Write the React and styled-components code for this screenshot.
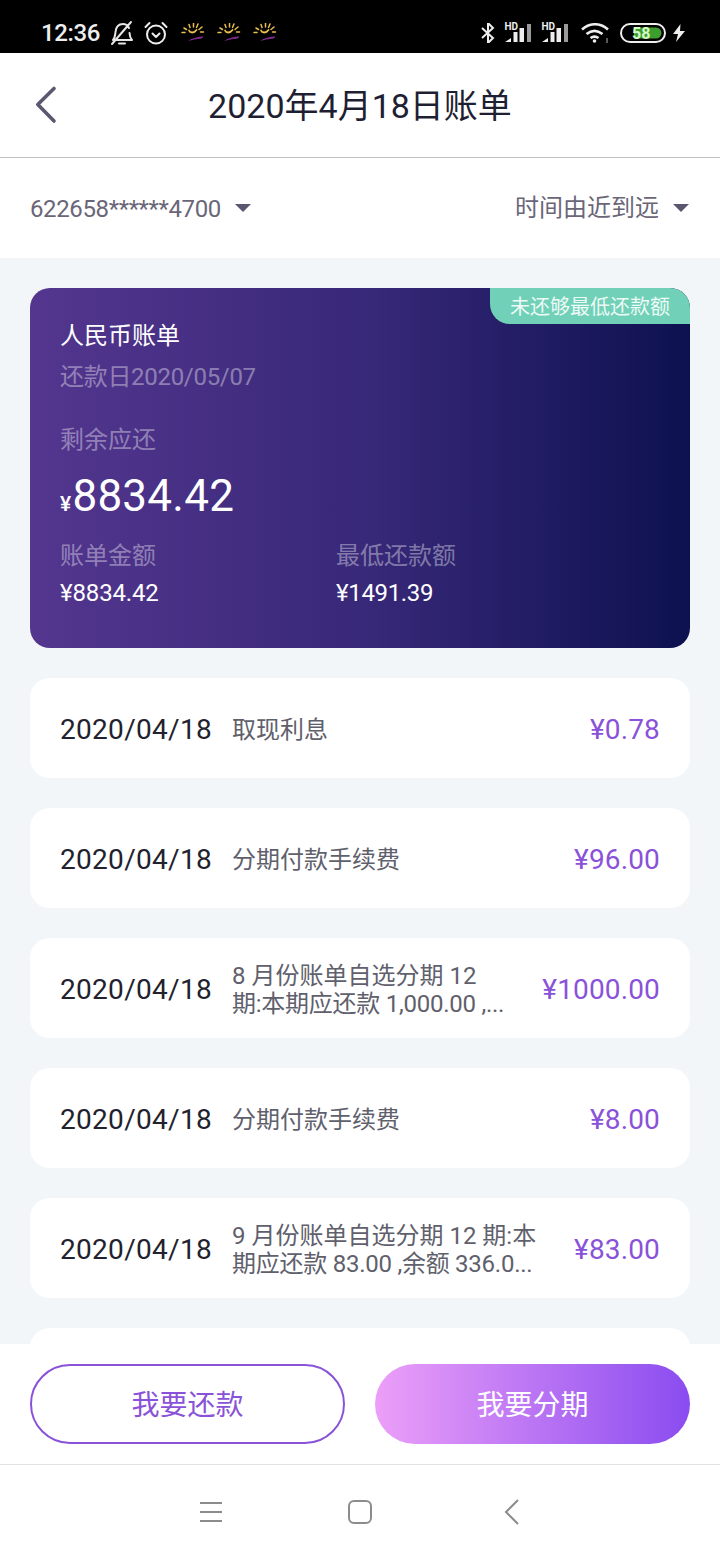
import React from 'react';
import styled, { createGlobalStyle } from 'styled-components';

const Global = createGlobalStyle`
  html, body { margin: 0; padding: 0; background: #fff; }
  * { box-sizing: border-box; }
  body { font-family: Roboto, "Noto Sans CJK SC", sans-serif; }
`;

const Phone = styled.div`
  width: 720px; height: 1560px; display: flex; flex-direction: column; overflow: hidden; background: #f2f6f8;
`;
const StatusBar = styled.div`
  height: 53px; flex: none; background: #000; color: #eee; display: flex; align-items: center; justify-content: space-between;
  padding: 13px 34px 0 41px;
`;
const StatusGroup = styled.div`
  display: flex; align-items: center; gap: ${p => p.$gap || 0}px; margin-left: ${p => p.$left || 0}px;
`;
const Clock = styled.span`
  font-size: 24px; font-weight: 500; margin-right: 1px; line-height: 1; width: 58px; white-space: nowrap; letter-spacing: -.4px;
`;
const Header = styled.header`
  height: 105px; flex: none; background: #fff; border-bottom: 1px solid #bdbdc2; display: flex; align-items: center; justify-content: center; position: relative;
`;
const BackButton = styled.div`
  position: absolute; left: 32px; top: 32px; width: 28px; height: 40px;
`;
const Title = styled.h1`
  margin: 0; font-size: 34px; font-weight: 400; color: #1f1f33; line-height: 1; position: relative; top: 1px;
`;
const FilterBar = styled.div`
  height: 100px; flex: none; background: #fff; display: flex; align-items: center; justify-content: space-between; padding: 0 31px 0 30px;
`;
const Filter = styled.div`
  display: flex; align-items: center; gap: 14px; font-size: 24px; line-height: 30px; color: #6a6678;
`;
const Label = styled.span`
  position: relative; top: ${p => p.$shift || 0}px; letter-spacing: ${p => p.$track || 0}px;
`;
const Caret = styled.span`
  width: 0; height: 0; border-left: 8px solid transparent; border-right: 8px solid transparent; border-top: 8px solid #5b5670;
`;
const Scroll = styled.main`
  flex: 1; min-height: 0; overflow: hidden; display: flex; flex-direction: column; gap: 30px; padding: 30px 30px 0;
`;
const BillCard = styled.section`
  height: 360px; flex: none; border-radius: 20px; position: relative; overflow: hidden; color: #fff;
  background: linear-gradient(90deg, #54368f 0%, #372878 52%, #0d1150 100%);
  padding: 32px 30px 0;
`;
const Badge = styled.div`
  position: absolute; top: 0; right: 0; height: 36px; width: 200px; background: #70d1b8; border-bottom-left-radius: 20px;
  display: flex; align-items: center; justify-content: center; font-size: 20px; color: #eefaf6; padding-bottom: 1px;
`;
const CardTitle = styled.div`
  font-size: 24px; line-height: 32px; color: #fff;
`;
const Muted = styled.div`
  font-size: 24px; line-height: 32px; color: rgba(255,255,255,.4);
  margin-top: ${p => p.$top || 0}px; letter-spacing: ${p => p.$track || 0}px;
`;
const Amount = styled.div`
  display: flex; align-items: baseline; font-size: 44px; line-height: 52px; margin-top: 14px; letter-spacing: .25px;
`;
const Yen = styled.span`
  font-size: 21px; font-weight: 500; margin-right: 1px;
`;
const Columns = styled.div`
  display: grid; grid-template-columns: 276px 1fr; margin-top: 10px;
`;
const Small = styled.div`
  font-size: 24px; line-height: 30px; color: #fff; margin-top: 6px; letter-spacing: ${p => p.$track || 0}px;
`;
const Row = styled.article`
  height: 100px; flex: none; background: #fff; border-radius: 20px; display: flex; align-items: center; padding: 2px 30px 0;
`;
const DateText = styled.div`
  font-size: 28px; color: #22222e; flex: none; width: 173px; white-space: nowrap; letter-spacing: .3px;
`;
const Desc = styled.div`
  flex: 1; min-width: 0; margin-left: -1px; font-size: 24px; line-height: 28px; color: #60606c;
  white-space: nowrap; padding-top: 2px;
`;
const DescLine = styled.div`
  letter-spacing: ${p => p.$second ? -0.25 : 0}px;
`;
const Price = styled.div`
  font-size: 28px; color: #8a52d8; flex: none; white-space: nowrap; letter-spacing: .15px;
`;
const Footer = styled.div`
  height: 121px; flex: none; background: #fff; border-bottom: 1px solid #e2e2e6; padding: 20px 30px 0; display: grid; grid-template-columns: 1fr 1fr; gap: 30px; align-items: start;
`;
const OutlineButton = styled.div`
  height: 80px; border-radius: 40px; border: 2px solid #8a52d8; color: #8a52d8; font-size: 28px; display: flex; align-items: center; justify-content: center; padding-bottom: 2px;
`;
const FillButton = styled.div`
  height: 80px; border-radius: 40px; color: #fff; font-size: 28px; display: flex; align-items: center; justify-content: center; padding-bottom: 2px;
  background: linear-gradient(90deg, #ec9ff8 0%, #8a4cf0 100%);
`;
const NavBar = styled.nav`
  height: 95px; flex: none; background: #fff; display: flex; align-items: center; padding: 0 0 2px 136.5px;
`;
const NavSlot = styled.div`
  width: ${p => p.$w || 149}px; display: flex; justify-content: center;
`;

const Sun = () => (
  <svg width="24" height="20" viewBox="0 0 24 20" fill="none">
    <g stroke="#e9bd4e" strokeWidth="1.5" strokeLinecap="round">
      <path d="M1 9.500h3M3 5l2.500 1.500M8 1.500l1 3M12.500 0v4M17 1l-1.500 3.500M21 4l-3 2.500M19.500 9h3" />
      <path d="M8 7.500c1 2.500 5 3 7.500-.5" strokeWidth="1.800" />
    </g>
    <path d="M7 18c4-3 10-4.500 15.500-4.500-1 1.500-1.500 2-3 2.200-4 .4-8 1-12.500 2.300z" fill="#7d2a8a" />
  </svg>
);
const Bell = () => (
  <svg width="24" height="26" viewBox="0 0 24 26" fill="none" stroke="#e6e6e6" strokeWidth="2" strokeLinecap="round" strokeLinejoin="round">
    <path d="M3 20c2-2 2-4 2.500-8C6 7 9 4 13 4c3 0 5 2 6 4M19.500 13c.2 3 .6 5 2.500 7H3M9 23.500h6M2 24L21 2" />
  </svg>
);
const Alarm = () => (
  <svg width="24" height="24" viewBox="0 0 24 24" fill="none" stroke="#eee" strokeWidth="2" strokeLinecap="round" strokeLinejoin="round">
    <circle cx="12" cy="13.500" r="9" />
    <path d="M8.500 12.500l3.500 3.500 3.500-3.500M1.500 6L5.500 2M22.500 6l-4-4" />
  </svg>
);
const Bluetooth = () => (
  <svg width="23" height="20" viewBox="0 0 23 20" fill="none" stroke="#eee" strokeWidth="2">
    <path d="M1 5l11 10-5 5V0l5 5L1 15" />
  </svg>
);
const HdLabel = styled.text`
  font: 700 10px Roboto, sans-serif; fill: #eee;
`;
const Signal = ({ w }) => (
  <svg width={w} height="22" viewBox={`0 0 ${w} 22`}>
    <HdLabel x="0.500" y="8">HD</HdLabel>
    <path d="M1 20l6-4v4z" fill="#eee" />
    <rect x="9.500" y="10" width="4" height="10" fill="#eee" />
    <rect x="15.500" y="6" width="4.500" height="14" fill="#eee" />
    <rect x="23" y="2" width="4" height="18" fill="#9a9a9a" />
  </svg>
);
const Wifi = () => (
  <svg width="39" height="20" viewBox="0 0 39 20" fill="none" stroke="#eee" strokeWidth="2.600">
    <path d="M1 6.500c8-7 18-7 26 0M5.500 11c5-4 11-4 16 0M9.500 15c3-2 5-2 8 0" />
    <circle cx="13.500" cy="18" r="1.800" fill="#eee" stroke="none" />
    <path d="M26 15v5" stroke="#777" strokeWidth="1.500" />
  </svg>
);
const BatteryText = styled.text`
  font: 700 16px Roboto, sans-serif; fill: #d6f8c8;
`;
const Battery = () => (
  <svg width="52" height="20" viewBox="0 0 52 20">
    <rect x="1" y="1" width="44" height="18" rx="9" fill="none" stroke="#eee" strokeWidth="2" />
    <path d="M14 4.500h22a5.500 5.500 0 0 1 0 11H14z" fill="#3c9e2c" />
    <BatteryText x="12" y="16">58</BatteryText>
  </svg>
);
const Bolt = () => (
  <svg width="14" height="18" viewBox="0 0 14 18"><path d="M8.500 0L1 10h5l-2 8 9-11H8z" fill="#eee" /></svg>
);

const rows = [
  [['取现利息'], '¥0.78'],
  [['分期付款手续费'], '¥96.00'],
  [['8 月份账单自选分期 12', '期:本期应还款 1,000.00 ,...'], '¥1000.00'],
  [['分期付款手续费'], '¥8.00'],
  [['9 月份账单自选分期 12 期:本', '期应还款 83.00 ,余额 336.0...'], '¥83.00'],
];

export default function App() {
  return (
    <Phone>
      <Global />
      <StatusBar>
        <StatusGroup $gap={10}>
          <Clock>12:36</Clock>
          <Bell /><Alarm />
          <StatusGroup $gap={12} $left={3}><Sun /><Sun /><Sun /></StatusGroup>
        </StatusGroup>
        <StatusGroup>
          <Bluetooth /><Signal w={37} /><Signal w={40} /><Wifi /><Battery /><Bolt />
        </StatusGroup>
      </StatusBar>
      <Header>
        <BackButton>
          <svg width="28" height="40" viewBox="0 0 28 40" fill="none" stroke="#5c5670" strokeWidth="3.600" strokeLinecap="round" strokeLinejoin="round">
            <path d="M22 3.500L5.800 19.500 22 36" />
          </svg>
        </BackButton>
        <Title>2020年4月18日账单</Title>
      </Header>
      <FilterBar>
        <Filter><Label $track={-0.37} $shift={1}>622658******4700</Label><Caret /></Filter>
        <Filter><Label>时间由近到远</Label><Caret /></Filter>
      </FilterBar>
      <Scroll>
        <BillCard>
          <Badge>未还够最低还款额</Badge>
          <CardTitle>人民币账单</CardTitle>
          <Muted $top={9} $track={-0.3}>还款日2020/05/07</Muted>
          <Muted $top={31}>剩余应还</Muted>
          <Amount><Yen>¥</Yen>8834.42</Amount>
          <Columns>
            <div><Muted>账单金额</Muted><Small $track={-0.15}>¥8834.42</Small></div>
            <div><Muted>最低还款额</Muted><Small $track={-0.35}>¥1491.39</Small></div>
          </Columns>
        </BillCard>
        {rows.map(([lines, p], i) => (
          <Row key={i}>
            <DateText>2020/04/18</DateText>
            <Desc>
              {lines.map((l, n) => <DescLine key={l} $second={n === 1}>{l}</DescLine>)}
            </Desc>
            <Price>{p}</Price>
          </Row>
        ))}
        <Row />
      </Scroll>
      <Footer>
        <OutlineButton>我要还款</OutlineButton>
        <FillButton>我要分期</FillButton>
      </Footer>
      <NavBar>
        <NavSlot>
          <svg width="24" height="22" viewBox="0 0 24 22" stroke="#8c8c8c" strokeWidth="2"><path d="M1 2h22M1 11h22M1 20h22" /></svg>
        </NavSlot>
        <NavSlot>
          <svg width="24" height="24" viewBox="0 0 24 24" fill="none" stroke="#8c8c8c" strokeWidth="2"><rect x="1" y="1" width="22" height="22" rx="5" /></svg>
        </NavSlot>
        <NavSlot $w={155}>
          <svg width="16" height="26" viewBox="0 0 16 26" fill="none" stroke="#8c8c8c" strokeWidth="2"><path d="M14 1L2 13l12 12" /></svg>
        </NavSlot>
      </NavBar>
    </Phone>
  );
}
